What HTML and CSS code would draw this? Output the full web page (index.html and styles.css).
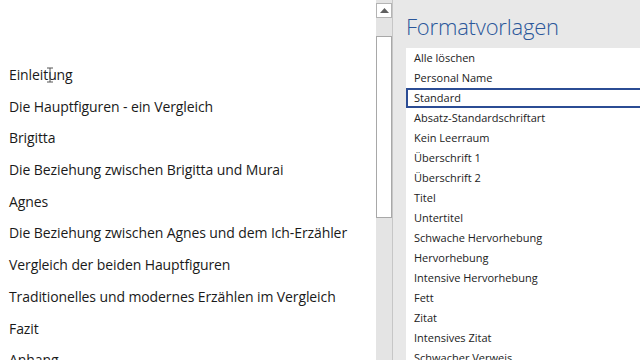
FILE: index.html
```html
<!DOCTYPE html>
<html lang="de">
<head>
  <meta charset="UTF-8">
  <title>Formatvorlagen</title>
  <link rel="stylesheet" href="styles.css">
</head>
<body>
  <div class="app">
    <div class="doc">
      <div class="topstrip"></div>
      <div class="page">
        <p class="heading">Einleit<span class="caret"><svg width="8" height="16" viewBox="0 0 8 16"><path d="M1 1h6M4 1v14M1 15h6" stroke="#555" stroke-width="1" fill="none"/></svg></span>ung</p>
        <p class="heading">Die Hauptfiguren - ein Vergleich</p>
        <p class="heading">Brigitta</p>
        <p class="heading">Die Beziehung zwischen Brigitta und Murai</p>
        <p class="heading">Agnes</p>
        <p class="heading">Die Beziehung zwischen Agnes und dem Ich-Erzähler</p>
        <p class="heading">Vergleich der beiden Hauptfiguren</p>
        <p class="heading">Traditionelles und modernes Erzählen im Vergleich</p>
        <p class="heading">Fazit</p>
        <p class="heading">Anhang</p>
      </div>
    </div>
    <div class="scrollbar">
      <div class="arrow"><svg width="9" height="5" viewBox="0 0 9 5"><path d="M0 5L4.5 0L9 5z" fill="#606060"/></svg></div>
      <div class="thumb"></div>
    </div>
    <div class="pane">
      <h2 class="pane-title">Formatvorlagen</h2>
      <ul class="styles">
        <li>Alle löschen</li>
        <li>Personal Name</li>
        <li class="selected">Standard</li>
        <li>Absatz-Standardschriftart</li>
        <li>Kein Leerraum</li>
        <li>Überschrift 1</li>
        <li>Überschrift 2</li>
        <li>Titel</li>
        <li>Untertitel</li>
        <li>Schwache Hervorhebung</li>
        <li>Hervorhebung</li>
        <li>Intensive Hervorhebung</li>
        <li>Fett</li>
        <li>Zitat</li>
        <li>Intensives Zitat</li>
        <li>Schwacher Verweis</li>
      </ul>
    </div>
  </div>
</body>
</html>
```

FILE: styles.css
```css
body {
  margin: 0;
  overflow: hidden;
  width: 640px;
  height: 360px;
}

.app {
  display: flex;
  height: 360px;
  overflow: hidden;
}

.doc {
  width: 376px;
  flex: none;
  background: #fff;
  display: flex;
  flex-direction: column;
}

.topstrip {
  height: 4px;
  background: linear-gradient(#cfcfcf, #ececec);
}

.page {
  padding: 63px 0 0 9px;
  font-family: "Open Sans", sans-serif;
  font-size: 14px;
  color: #1a1a1a;
}

.heading {
  margin: 0;
  height: 31.7px;
  line-height: 24px;
  white-space: nowrap;
  letter-spacing: -0.1px;
}

.caret {
  position: relative;
  display: inline-block;
  width: 0;
}

.caret svg {
  position: absolute;
  left: -2px;
  top: -13px;
}

.scrollbar {
  width: 16px;
  flex: none;
  background: #e4e4e4;
  border-right: 1px solid #c6c6c6;
  display: flex;
  flex-direction: column;
  padding-top: 3px;
}

.arrow {
  height: 13px;
  background: #fff;
  border: 1px solid #b4b4b4;
  display: flex;
  align-items: center;
  justify-content: center;
}

.thumb {
  margin-top: 18px;
  height: 180px;
  background: #fff;
  border: 1px solid #a8a8a8;
}

.pane {
  flex: 1;
  background: #e8e8e8;
  padding: 0 0 0 13px;
}

.pane-title {
  margin: 10px 0 0 0;
  height: 38px;
  font-family: "Open Sans", sans-serif;
  font-weight: 300;
  font-size: 22px;
  line-height: 32px;
  color: #2b579a;
  letter-spacing: -0.2px;
}

.styles {
  list-style: none;
  margin: 0;
  padding: 0;
  background: #fff;
  font-family: "Open Sans", sans-serif;
  font-size: 11px;
  color: #222;
}

.styles li {
  height: 20px;
  line-height: 20px;
  padding-left: 8px;
  box-sizing: border-box;
  white-space: nowrap;
}

.styles li.selected {
  border: 2px solid #2b4c94;
  border-right: none;
  padding-left: 6px;
  line-height: 16px;
}
```
